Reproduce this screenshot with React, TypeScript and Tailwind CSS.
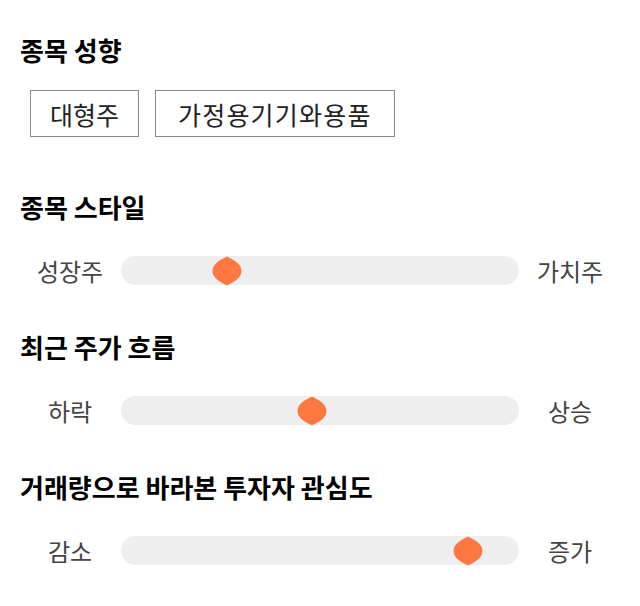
const font = { fontFamily: '"Noto Sans CJK KR", "Noto Sans", sans-serif' };

const tags = [
  { label: "대형주", cls: "px-[19px]" },
  { label: "가정용기기와용품", cls: "px-[22px] tracking-[1.2px]" },
];

const sliders = [
  { title: "종목 스타일", left: "성장주", right: "가치주", pos: 91 },
  { title: "최근 주가 흐름", left: "하락", right: "상승", pos: 176 },
  { title: "거래량으로 바라본 투자자 관심도", left: "감소", right: "증가", pos: 332 },
];

function Thumb({ left }: { left: number }) {
  return (
    <svg
      className="absolute top-0"
      style={{ left }}
      width="30"
      height="30"
      viewBox="0 0 30 30"
    >
      <path
        d="M15 0.5C21 3.5 29.5 7.5 29.5 15C29.5 22.5 21 26.5 15 29.5C9 26.5 0.5 22.5 0.5 15C0.5 7.5 9 3.5 15 0.5Z"
        fill="#ff7741"
      />
    </svg>
  );
}

export default function App() {
  return (
    <div className="w-[640px] h-[606px] bg-white pl-5 pt-[35px]" style={font}>
      <h2 className="h-[30px] text-[26px] leading-[30px] font-bold text-black">종목 성향</h2>
      <div className="mt-[25px] ml-[10px] flex gap-4">
        {tags.map((t) => (
          <span
            key={t.label}
            className={`h-[47px] pt-[2px] flex items-center border border-[#8a8a8a] text-[25px] text-[#222] ${t.cls}`}
          >
            {t.label}
          </span>
        ))}
      </div>

      {sliders.map((s, i) => (
        <section key={s.title} className={i === 0 ? "mt-[55px]" : "mt-[46px]"}>
          <h2 className="h-[30px] text-[26px] leading-[30px] font-bold text-black">{s.title}</h2>
          <div className="mt-[34px] ml-[10px] grid grid-cols-[80px_398px_80px] gap-x-[11px] items-center h-[30px]">
            <span className="text-center text-[24px] leading-[30px] text-[#444]">{s.left}</span>
            <div className="relative h-[30px]">
              <div className="absolute inset-x-0 top-0 h-[29px] rounded-full bg-[#eeeeee]" />
              <Thumb left={s.pos} />
            </div>
            <span className="text-center text-[24px] leading-[30px] text-[#444]">{s.right}</span>
          </div>
        </section>
      ))}
    </div>
  );
}
